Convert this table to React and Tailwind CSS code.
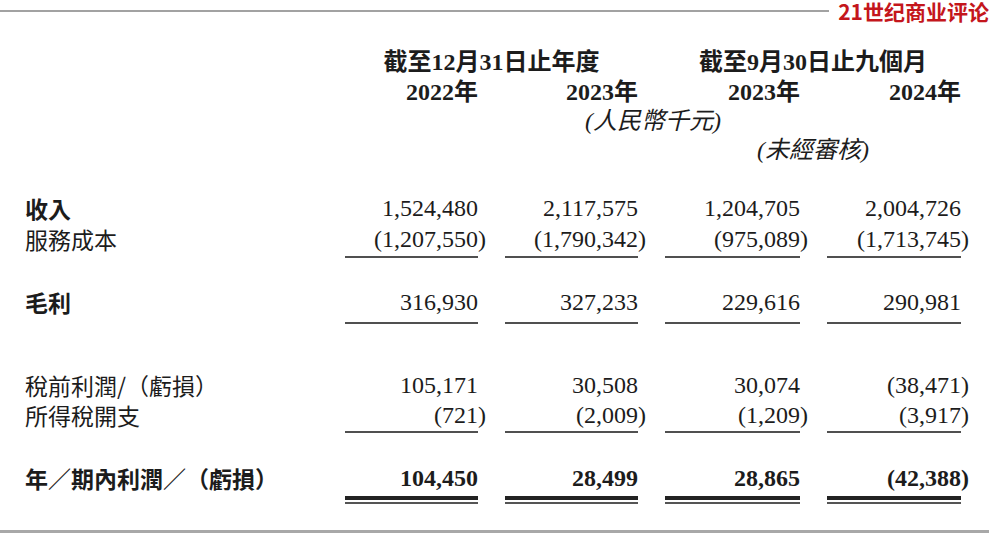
const SERIF = "font-['Liberation_Serif','Noto_Sans_CJK_TC',serif]";
const CJK = "font-['Noto_Sans_CJK_TC',sans-serif]";
const GRID = 'grid grid-cols-[293px_133px_133px_135px_134px] gap-x-[27px] pl-[25px]';

const ROWS_TOP = [
  { label: '收入', labelBold: true, values: ['1,524,480', '2,117,575', '1,204,705', '2,004,726'] },
  { label: '服務成本', values: ['(1,207,550)', '(1,790,342)', '(975,089)', '(1,713,745)'] },
];

const ROWS_TAX = [
  { label: '稅前利潤/（虧損）', values: ['105,171', '30,508', '30,074', '(38,471)'] },
  { label: '所得稅開支', values: ['(721)', '(2,009)', '(1,209)', '(3,917)'] },
];

function Amount({ value, bold }) {
  const negative = value.startsWith('(');
  return (
    <div className={`${SERIF} text-right text-[24px] text-[#1c1c1c] ${bold ? 'font-bold' : ''}`}>
      {negative ? (
        <>
          {value.slice(0, -1)}
          <span className="-mr-[8px]">)</span>
        </>
      ) : (
        value
      )}
    </div>
  );
}

function Row({ label, values, labelBold, bold, leading = 'leading-[30px]', className = '' }) {
  return (
    <div className={`${GRID} ${leading} ${className}`}>
      <div className={`${CJK} text-[23px] text-[#1c1c1c] ${labelBold || bold ? 'font-bold' : ''}`}>{label}</div>
      {values.map((v, i) => (
        <Amount key={i} value={v} bold={bold} />
      ))}
    </div>
  );
}

function Rule({ className = '' }) {
  return (
    <div className={`${GRID} ${className}`}>
      <div />
      {[0, 1, 2, 3].map(i => (
        <div key={i} className="h-[2px] bg-[#505050]" />
      ))}
    </div>
  );
}

function DoubleRule({ className = '' }) {
  return (
    <div className={`${GRID} ${className}`}>
      <div />
      {[0, 1, 2, 3].map(i => (
        <div key={i} className="flex flex-col">
          <div className="h-[4px] bg-[#222]" />
          <div className="mt-[2px] h-[2px] bg-[#555]" />
        </div>
      ))}
    </div>
  );
}

export default function App() {
  return (
    <div className="flex h-[533px] w-[989px] flex-col overflow-hidden bg-white">
      {/* masthead */}
      <div className="flex h-[22px] items-start">
        <div className="mt-[10px] h-[2px] flex-1 bg-[#a2a2a2]" />
        <div className="ml-[9px] font-['Noto_Sans_CJK_SC',sans-serif] text-[21px] font-bold leading-[22px] text-[#c4161c]">
          21世纪商业评论
        </div>
      </div>

      {/* column headers */}
      <div className={`${GRID} mt-[25px] ${SERIF} font-bold text-[24px] leading-[30px] text-[#1c1c1c]`}>
        <div />
        <div className="col-span-2 text-center">截至12月31日止年度</div>
        <div className="col-span-2 text-center">截至9月30日止九個月</div>
        <div />
        <div className="text-right">2022年</div>
        <div className="text-right">2023年</div>
        <div className="text-right">2023年</div>
        <div className="text-right">2024年</div>
      </div>
      <div className={`${GRID} ${SERIF} text-[24px] italic leading-[29px] text-[#1c1c1c]`}>
        <div />
        <div className="col-span-4 text-center">(人民幣千元)</div>
        <div />
        <div className="col-start-4 col-span-2 text-center">(未經審核)</div>
      </div>

      {/* revenue */}
      <div className="mt-[28px]">
        {ROWS_TOP.map(r => (
          <Row key={r.label} {...r} leading="leading-[31px]" />
        ))}
      </div>
      <Rule className="mt-[1px]" />

      <Row className="mt-[29px]" label="毛利" labelBold values={['316,930', '327,233', '229,616', '290,981']} />
      <Rule className="mt-[5px]" />

      <div className="mt-[46px]">
        {ROWS_TAX.map(r => (
          <Row key={r.label} {...r} />
        ))}
      </div>
      <Rule className="mt-[1px]" />

      <Row className="mt-[30px]" label="年／期內利潤／（虧損）" bold values={['104,450', '28,499', '28,865', '(42,388)']} />
      <DoubleRule className="mt-[3px]" />

      <div className="mt-auto h-[3px] bg-[#a8a8a8]" />
    </div>
  );
}
